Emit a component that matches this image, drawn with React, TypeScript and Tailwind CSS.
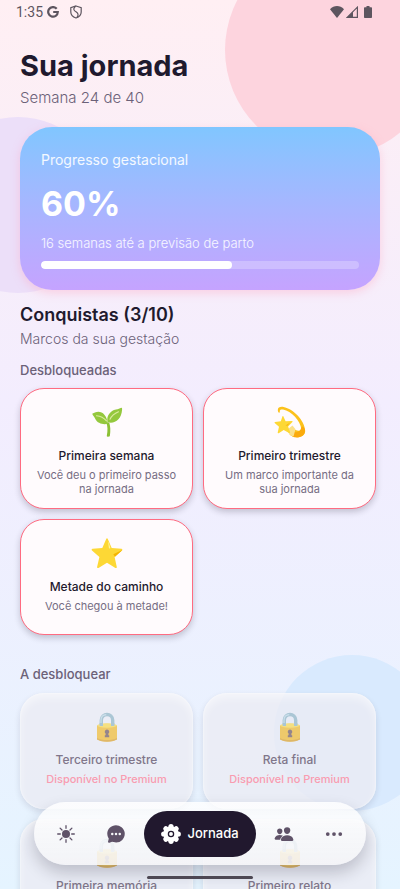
import { ReactNode } from 'react';
import { IoChatbubbleEllipses, IoPeople, IoEllipsisHorizontal } from 'react-icons/io5';

function Seedling() {
  return (
    <svg className="w-8 h-8" viewBox="0 0 32 32" fill="none" aria-hidden="true">
      <path d="M15.2 16.5c1.500 3.500 1.700 8 .6 13.200-.3 1.300 2.900 1.400 3.100.1.800-5.300.5-9.300-.7-13.200z" fill="#8CC035" />
      <path d="M16.800 17.600C13.500 19 6.500 18 4.200 12.800 3.600 11.300 1.800 9.400 1.400 8.300c-.3-1 1.400-1.100 2.500-1.700 5.400-2.500 11.700.8 12.900 11z" fill="#94C83D" />
      <path d="M16.700 16.300c-1.800-6 2.700-11.600 8.300-12.700 2.200-.5 3.700-1.400 5.200-1.900.9-.2 1 .8.900 1.800C30.500 13.500 23.700 18.300 16.700 16.300z" fill="#94C83D" />
      <path d="M5.500 9.700c4 .3 7.300 2 10 5.200M19 13.200c1.700-3.500 4.500-5.700 8.500-7.400" stroke="#DCEBA0" strokeWidth="1.100" strokeLinecap="round" />
    </svg>
  );
}

function DizzyStar() {
  return (
    <svg className="w-8 h-8" viewBox="0 0 32 32" fill="none" aria-hidden="true">
      <path d="M4.500 6.500C2.500 2.500 5 .3 9.500 1 19.500 3 30.800 14.500 31.200 25 31 31.500 22 33 16 29l-2-3.500 4.500-4c3 3.500 8 4.500 8.800 1.500C26.500 15 17.500 5 9 3.500 6.300 3 5.200 4.200 6 6.500z" fill="#FCC21B" />
      <path d="M18.500 25.500c4 1.500 8 .5 8.800-4 1.300-2 2.500-1 3.700 2 .6 7-6.900 9.500-12.500 7.200z" fill="#FBAA0C" />
      <path d="M14 23l4.500-3.500 3 3.800-2 7.200c-3-.5-4.500-2.500-5.500-4.500z" fill="#FBE08A" />
      <path d="M9.300 10.200l2.300 5 6.400-.2c.7.1.8.7.4 1.100l-4.300 4.300 2 5.800c.1.700-.4 1-1 .7L9.700 24l-5 3.200c-.6.300-1.100-.1-1-.7L5 20.800.7 17c-.4-.5-.2-1 .4-1.100l5.700-.6 1.700-5c.2-.5.600-.5.800-.1z" fill="#FDD835" />
      <path d="M11.500 19.500l5-3.300-3 3.500z" fill="#F9B411" />
    </svg>
  );
}

function GoldStar() {
  return (
    <svg className="w-8 h-8" viewBox="0 0 32 32" fill="none" aria-hidden="true">
      <path d="M16.700 1.700l4 9.200 9.700.8c1 .1 1.300 1.100.6 1.700l-7.400 6.700 2.200 9.800c.2.900-.7 1.500-1.400 1L16 25.800l-8.500 5.100c-.8.4-1.600-.2-1.400-1l2.300-9.800L1 13.400c-.7-.6-.4-1.600.6-1.700l9.700-.8 4-9.200c.3-.7 1.100-.7 1.400 0z" fill="#FDD835" />
      <path d="M22.300 17.300l8.900-4.400c-.1.200-.1.300-.3.500L24 19.700z" fill="#F4B400" />
      <path d="M17.600 5.200l1.700 5.400c.2 1-1.200 1.200-1.400.3l-.7-5.400c0-.5.300-.6.400-.3z" fill="#FFF59D" />
    </svg>
  );
}

function Lock() {
  return (
    <svg className="w-8 h-8" viewBox="0 0 32 32" fill="none" aria-hidden="true">
      <path d="M10.300 15V9.200c0-7.600 11.400-7.600 11.400 0V15" stroke="#82AEC0" strokeWidth="3.400" />
      <path d="M10 13V9.300c0-3.700 2.500-5.500 5.300-5.600" stroke="#B9D8E4" strokeWidth="1.200" />
      <path d="M6 14.500c6-2.300 14-2.300 20 0v13.700c-5.500 3.100-14.500 3.100-20 0z" fill="#F2B410" />
      <ellipse cx="16" cy="14.500" rx="9.800" ry="2.200" fill="#FDD835" />
      <path d="M10.300 15v-3M21.700 15v-3" stroke="#82AEC0" strokeWidth="3.400" />
      <path d="M6 27c5.500 2.800 14.500 2.800 20 0v1.400c-5.500 3-14.500 3-20 0z" fill="#D9960B" />
      <path d="M16 18.500a2.300 2.300 0 0 1 1.400 4.100v1.600h.8v2h-4.400v-2h.8v-1.600a2.300 2.300 0 0 1 1.400-4.100z" fill="#5C4148" />
    </svg>
  );
}

function SunIcon() {
  return (
    <svg className="w-[18px] h-[18px]" viewBox="0 0 18 18" aria-hidden="true">
      <circle cx="9" cy="9" r="4" fill="currentColor" />
      <path
        d="M9 .7v2.600M9 14.700v2.600M.7 9h2.600M14.700 9h2.600M3.100 3.100L5 5M13 13l1.900 1.900M3.100 14.900L5 13M13 5l1.900-1.900"
        stroke="currentColor"
        strokeWidth="1.300"
        strokeLinecap="round"
      />
    </svg>
  );
}

const petals = [0, 45, 90, 135, 180, 225, 270, 315];

function FlowerIcon() {
  return (
    <svg className="w-5 h-5" viewBox="0 0 20 20" aria-hidden="true">
      <circle cx="10" cy="10" r="7.800" fill="currentColor" />
      {petals.map((angle) => (
        <circle key={angle} cx="10" cy="2.700" r="2.600" fill="currentColor" transform={`rotate(${angle} 10 10)`} />
      ))}
      <circle cx="10" cy="10" r="2.600" fill="none" stroke="#21182e" strokeWidth="1.300" />
    </svg>
  );
}

function StatusBar() {
  return (
    <div className="flex items-center justify-between h-6 pl-4 pr-6 font-[Roboto,sans-serif] text-[#5d555f]">
      <div className="flex items-center">
        <span className="text-sm">1:35</span>
        <svg className="w-3 h-3 ml-1" viewBox="0 0 12 12" fill="none" stroke="currentColor" strokeWidth="2.200" aria-hidden="true">
          <path d="M9.700 2.800A4.800 4.800 0 1 0 10.800 6H6.200" />
        </svg>
        <svg className="w-3.5 h-3.5 ml-2.5" viewBox="0 0 14 14" fill="none" stroke="currentColor" strokeWidth="1.200" aria-hidden="true">
          <path d="M7 1L12.200 2.600V7c0 3-2.200 5-5.200 6-3-1-5.200-3-5.200-6V2.600z" />
          <path d="M6.500 1.200C3.500 4 5 5.500 7 6.800s3 3 1 5.500" />
        </svg>
      </div>
      <div className="flex items-center">
        <svg className="w-3.5 h-3" viewBox="0 0 14 12" fill="currentColor" aria-hidden="true">
          <path d="M7 12L0 3.200c4-4.200 10-4.200 14 0z" />
        </svg>
        <svg className="w-3 h-3 ml-0.5" viewBox="0 0 12 12" aria-hidden="true">
          <path d="M1.200 11.400L11.400 1.200v10.200z" fill="none" stroke="currentColor" strokeWidth="1.200" />
          <path d="M.5 12L7 5.500V12z" fill="currentColor" />
        </svg>
        <svg className="w-2 h-3 ml-1.5 mr-1" viewBox="0 0 8 12" fill="currentColor" aria-hidden="true">
          <path d="M2.500 0h3v1.200H7c.6 0 1 .4 1 1V11c0 .6-.4 1-1 1H1c-.6 0-1-.4-1-1V2.200c0-.6.4-1 1-1h1.500z" />
        </svg>
      </div>
    </div>
  );
}

interface AchievementProps {
  icon: ReactNode;
  title: string;
  description: string;
}

function UnlockedCard({ icon, title, description }: AchievementProps) {
  return (
    <article className="flex flex-col items-center min-h-[116px] px-3 pt-[17px] pb-3 rounded-3xl border border-[#ff6b81] bg-[#fffbfd] text-center shadow-[0_3px_6px_rgba(31,26,46,0.22)]">
      {icon}
      <h4 className="mt-2 text-xs leading-5 font-medium text-[#1f1a2e]">{title}</h4>
      <p className="mt-0.5 text-[11px] leading-[14px] text-[#766d83]">{description}</p>
    </article>
  );
}

function LockedCard({ title }: { title: string }) {
  return (
    <article className="flex flex-col items-center min-h-[116px] px-3 pt-[18px] pb-3 rounded-3xl bg-[#ebebf3]/75 text-center shadow-[0_3px_6px_rgba(31,26,46,0.12),inset_0_5px_8px_rgba(255,255,255,0.5),inset_0_0_2px_rgba(255,255,255,0.8)]">
      <div className="opacity-60"><Lock /></div>
      <h4 className="mt-2 text-xs leading-[18px] font-medium text-[#80768a]">{title}</h4>
      <p className="mt-[3px] text-[11px] leading-[14px] font-medium text-[#f99cb0]">Disponível no Premium</p>
    </article>
  );
}

const unlocked = [
  { icon: <Seedling />, title: 'Primeira semana', description: 'Você deu o primeiro passo na jornada' },
  { icon: <DizzyStar />, title: 'Primeiro trimestre', description: 'Um marco importante da sua jornada' },
  { icon: <GoldStar />, title: 'Metade do caminho', description: 'Você chegou à metade!' },
];

const locked = ['Terceiro trimestre', 'Reta final', 'Primeira memória', 'Primeiro relato'];

export default function App() {
  const progress = 60;
  const navButtonClass = 'flex items-center justify-center w-[50px] h-11 text-[#5f5268]';

  return (
    <div className="relative h-dvh overflow-hidden bg-linear-to-b from-[#ffeff3] via-[#f3edfe] via-45% to-[#e5f4ff] font-[Inter,sans-serif]">
      {/* Background circles */}
      <div className="absolute -top-[57px] -right-[39px] w-[214px] h-[214px] rounded-full bg-[#fdd4de]" />
      <div className="absolute top-[117px] -left-[70px] w-[176px] h-[176px] rounded-full bg-[#ecdff9]" />
      <div className="absolute bottom-[78px] -right-[30px] w-[156px] h-[156px] rounded-full bg-[#d9eafe]" />

      <div className="relative h-full overflow-y-auto [scrollbar-width:none]">
        <StatusBar />

        <main className="px-5 pt-6 pb-28">
          <h1 className="text-[29px] leading-9 font-bold text-[#1f1a2e]">Sua jornada</h1>
          <p className="mt-1 text-[15px] leading-5 font-light text-[#6b6178]">Semana 24 de 40</p>

          {/* Progress */}
          <section className="mt-[19px] px-[21px] pt-[22px] pb-[21px] rounded-[32px] bg-linear-to-b from-[#80c6ff] to-[#c5a3ff] text-white shadow-[0_3px_10px_rgba(255,150,180,0.35)]">
            <h2 className="text-sm leading-[22px] text-white/90">Progresso gestacional</h2>
            <p className="mt-1.5 text-[34px] leading-[54px] font-bold">{progress}%</p>
            <p className="mt-1 text-[13px] leading-4 font-light text-white/90">16 semanas até a previsão de parto</p>
            <div
              role="progressbar"
              aria-label="Progresso gestacional"
              aria-valuenow={progress}
              className="mt-[10px] h-2 rounded-full bg-white/25 overflow-hidden"
            >
              <div className="h-full rounded-full bg-white" style={{ width: `${progress}%` }} />
            </div>
          </section>

          <h2 className="mt-3 text-lg leading-[26px] font-semibold text-[#1f1a2e]">Conquistas (3/10)</h2>
          <p className="mt-px text-sm leading-5 font-light text-[#6b6178]">Marcos da sua gestação</p>

          <h3 className="mt-3 text-[13px] leading-[18px] font-medium text-[#6b6178]">Desbloqueadas</h3>
          <div className="grid grid-cols-2 gap-[10px] mt-[9px] mr-1">
            {unlocked.map((item) => (
              <UnlockedCard key={item.title} {...item} />
            ))}
          </div>

          <h3 className="mt-[30px] text-[13px] leading-[18px] font-medium text-[#6b6178]">A desbloquear</h3>
          <div className="grid grid-cols-2 gap-[10px] mt-[10px] mr-1">
            {locked.map((title) => (
              <LockedCard key={title} title={title} />
            ))}
          </div>
        </main>
      </div>

      {/* Bottom navigation */}
      <nav className="absolute bottom-6 inset-x-[34px] flex items-center justify-center h-[63px] rounded-full bg-white/75 bg-linear-to-b from-white/30 to-[#ececf1]/50 shadow-[0_8px_16px_rgba(31,26,46,0.22)]">
        <button aria-label="Hoje" className={navButtonClass}>
          <SunIcon />
        </button>
        <button aria-label="Conversa" className={navButtonClass}>
          <IoChatbubbleEllipses className="w-5 h-5" />
        </button>
        <button aria-current="page" className="flex items-center justify-center gap-1.5 w-28 h-[46px] mx-[3px] rounded-full bg-[#21182e] text-white">
          <FlowerIcon />
          <span className="text-[13px] font-medium">Jornada</span>
        </button>
        <button aria-label="Comunidade" className={navButtonClass}>
          <IoPeople className="w-5 h-5" />
        </button>
        <button aria-label="Mais" className={navButtonClass}>
          <IoEllipsisHorizontal className="w-5 h-5" />
        </button>
      </nav>

      <div className="absolute bottom-[10px] left-1/2 -translate-x-1/2 w-[106px] h-[3px] rounded-full bg-[#4d4753]" />
    </div>
  );
}
